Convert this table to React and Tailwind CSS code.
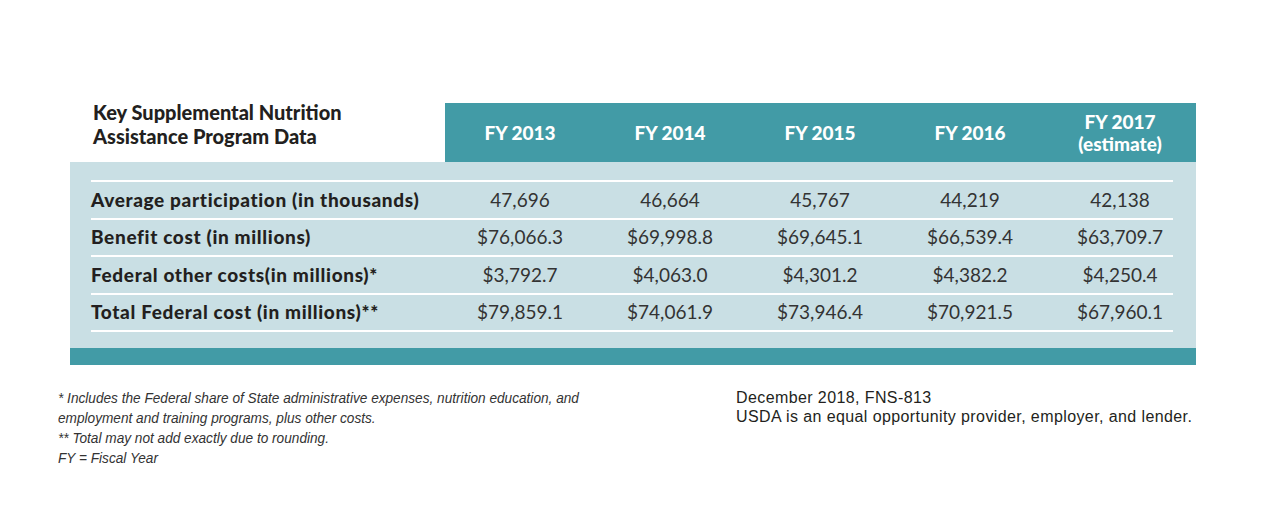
import React from 'react';

const years = [
  { label: 'FY 2013' },
  { label: 'FY 2014' },
  { label: 'FY 2015' },
  { label: 'FY 2016' },
  { label: 'FY 2017', sub: '(estimate)' },
];

const rows = [
  { label: 'Average participation (in thousands)', values: ['47,696', '46,664', '45,767', '44,219', '42,138'] },
  { label: 'Benefit cost (in millions)', values: ['$76,066.3', '$69,998.8', '$69,645.1', '$66,539.4', '$63,709.7'] },
  { label: 'Federal other costs(in millions)*', values: ['$3,792.7', '$4,063.0', '$4,301.2', '$4,382.2', '$4,250.4'] },
  { label: 'Total Federal cost (in millions)**', values: ['$79,859.1', '$74,061.9', '$73,946.4', '$70,921.5', '$67,960.1'] },
];

const App = () => {
  return (
    <div className="w-[1268px] h-[507px] bg-white text-[#231f20] overflow-hidden">
      <div className="pt-[100px] pl-[70px] w-[1196px]">
        {/* header */}
        <div className="flex">
          <div className="w-[375px] pl-[23px] font-['Lato',sans-serif] font-black text-[20px] leading-[24px]">
            Key Supplemental Nutrition
            <br />
            Assistance Program Data
          </div>
          <div className="mt-[3px] h-[59px] flex-1 bg-[#429ba6] flex text-white font-['Lato',sans-serif] font-black text-[19px]">
            {years.map((y) => (
              <div key={y.label} className="w-[150px] flex flex-col items-center justify-center leading-[22px]">
                <span>{y.label}</span>
                {y.sub && <span>{y.sub}</span>}
              </div>
            ))}
          </div>
        </div>

        {/* body */}
        <div className="bg-[#c9dfe4] pt-[18px] pb-[16px] pl-[21px] pr-[23px]">
          <div className="border-t-2 border-white">
            {rows.map((r) => (
              <div key={r.label} className="grid grid-cols-[354px_150px_150px_150px_150px_128px] h-[37.5px] border-b-2 border-white items-center">
                <div className="font-['Lato',sans-serif] font-black text-[19px] tracking-[0.65px] whitespace-nowrap">{r.label}</div>
                {r.values.map((v, i) => (
                  <div
                    key={i}
                    className={`text-center font-['Lato',sans-serif] text-[19px] text-[#333] ${i === 4 ? 'pl-[22px]' : ''}`}
                  >
                    {v}
                  </div>
                ))}
              </div>
            ))}
          </div>
        </div>
        <div className="h-[17px] bg-[#429ba6]" />
      </div>

      {/* footnotes */}
      <div className="flex mt-[23px]">
        <div className="w-[736px] pl-[58px]">
          <div className="origin-left scale-x-[0.88] whitespace-nowrap font-['Liberation_Sans',sans-serif] italic text-[15.5px] leading-[20px] text-[#333]">
            * Includes the Federal share of State administrative expenses, nutrition education, and
            <br />
            employment and training programs, plus other costs.
            <br />
            ** Total may not add exactly due to rounding.
            <br />
            FY = Fiscal Year
          </div>
        </div>
        <div className="font-['Liberation_Sans',sans-serif] text-[16px] tracking-[0.4px] leading-[19px] text-[#231f20]">
          December 2018, FNS-813
          <br />
          USDA is an equal opportunity provider, employer, and lender.
        </div>
      </div>
    </div>
  );
};

export default App;
